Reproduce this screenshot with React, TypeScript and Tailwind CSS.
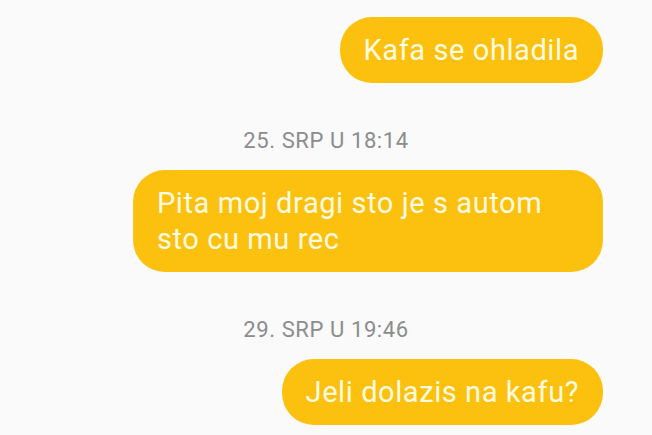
const thread = [
  { kind: "msg", text: "Kafa se ohladila" },
  { kind: "time", text: "25. SRP U 18:14" },
  { kind: "msg", text: "Pita moj dragi sto je s autom sto cu mu rec" },
  { kind: "time", text: "29. SRP U 19:46" },
  { kind: "msg", text: "Jeli dolazis na kafu?" },
];

export default function App() {
  return (
    <div
      className="h-[435px] w-[652px] overflow-hidden bg-[#fafafa] pt-[17px] pr-[49px]"
      style={{ fontFamily: "Roboto, 'Liberation Sans', sans-serif" }}
    >
      <div className="flex flex-col">
        {thread.map((item, i) =>
          item.kind === "time" ? (
            <div
              key={i}
              className="mt-[44px] mb-[15px] pl-[49px] text-center text-[22px] leading-[28px] tracking-[0.6px] text-[#8c8c8c]"
            >
              {item.text}
            </div>
          ) : (
            <div key={i} className="flex justify-end">
              <div className="max-w-[470px] rounded-[32px] bg-[#fcc00e] px-6 py-[15px] text-[29px] leading-[36px] tracking-[0.58px] text-[#fffbe0]">
                {item.text}
              </div>
            </div>
          )
        )}
      </div>
    </div>
  );
}
